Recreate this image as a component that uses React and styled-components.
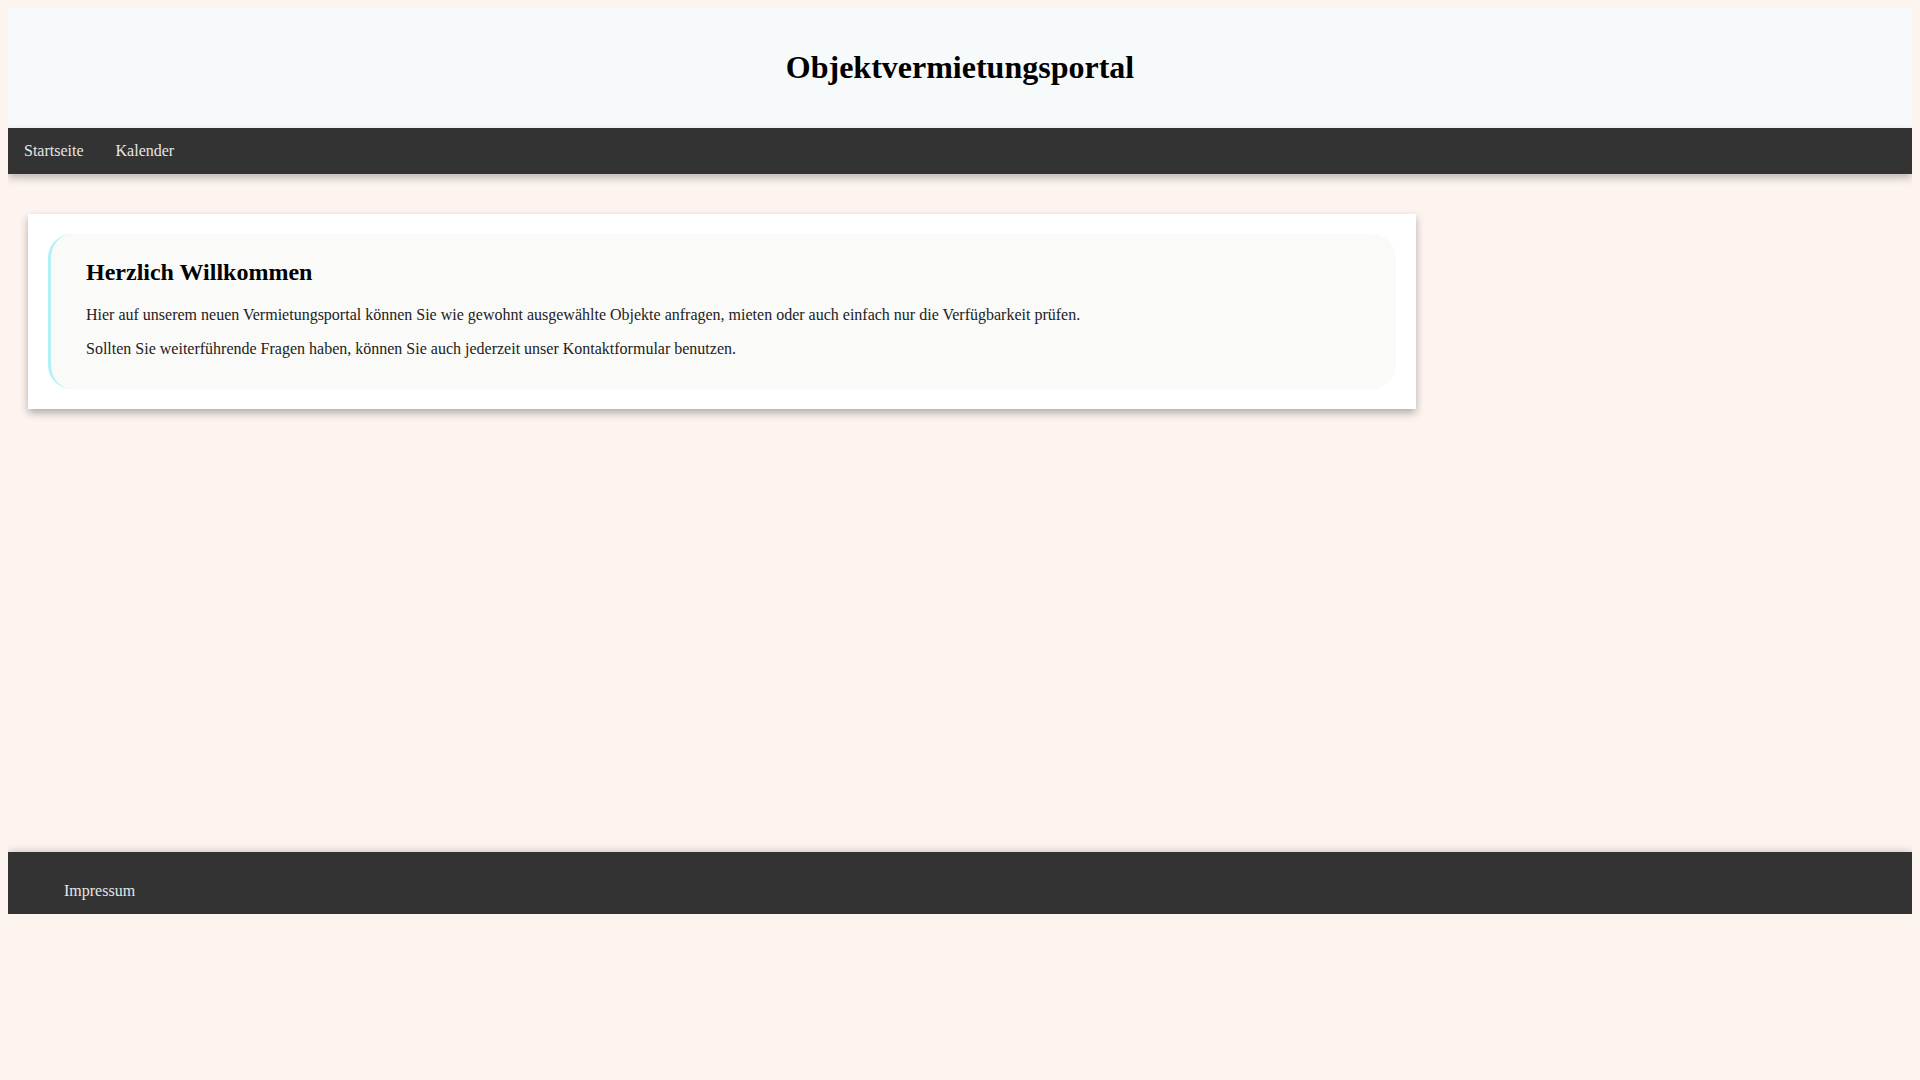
import styled, { createGlobalStyle } from 'styled-components'

const GlobalStyle = createGlobalStyle`
  body {
    margin: 8px;
    background: #fdf4ef;
    font-family: "Liberation Serif", "Times New Roman", serif;
    color: #111;
  }
`

const Header = styled.header`
  background: #f7fafb;
  padding: 20px;
  text-align: center;
  box-shadow: 0 0 10px rgba(0, 0, 0, 0.25);
  position: relative;
  z-index: 1;

  h1 {
    margin: 21px 0 22px;
    font-size: 32px;
    line-height: 37px;
    font-weight: bold;
    color: #000;
  }
`

const Nav = styled.nav`
  background: #333;
  display: flex;
  box-shadow: 0 4px 8px rgba(0, 0, 0, 0.25);
  position: relative;
  z-index: 1;
`

const NavLink = styled.a`
  display: block;
  padding: 14px 16px;
  color: #e6e6e6;
  text-decoration: none;
  font-size: 16px;
  line-height: 18px;
  cursor: pointer;
`

const Main = styled.main`
  box-sizing: border-box;
  min-height: 678px;
  padding: 40px 20px 20px;
`

const Card = styled.section`
  width: 1348px;
  background: #fff;
  padding: 20px;
  box-shadow: 0 4px 8px rgba(0, 0, 0, 0.3);
`

const Welcome = styled.div`
  background: #fafaf9;
  border-left: 3px solid #b3f0f5;
  border-radius: 24px;
  padding: 5px 35px 15px;

  h2 {
    margin: 20px 0;
    font-size: 24px;
    line-height: 27px;
    color: #000;
  }

  p {
    margin: 16px 0;
    font-size: 16px;
    line-height: 18px;
    color: #222;
  }
`

const Footer = styled.footer`
  background: #333;
  padding: 30px 16px 14px 56px;
  box-shadow: 0 0 8px rgba(0, 0, 0, 0.25);
`

const FooterLink = styled.a`
  color: #e6e6e6;
  font-size: 16px;
  line-height: 18px;
  text-decoration: none;
`

export default function App() {
  return (
    <>
      <GlobalStyle />
      <Header>
        <h1>Objektvermietungsportal</h1>
      </Header>
      <Nav>
        <NavLink>Startseite</NavLink>
        <NavLink>Kalender</NavLink>
      </Nav>
      <Main>
        <Card>
          <Welcome>
            <h2>Herzlich Willkommen</h2>
            <p>
              Hier auf unserem neuen Vermietungsportal können Sie wie gewohnt ausgewählte Objekte
              anfragen, mieten oder auch einfach nur die Verfügbarkeit prüfen.
            </p>
            <p>
              Sollten Sie weiterführende Fragen haben, können Sie auch jederzeit unser
              Kontaktformular benutzen.
            </p>
          </Welcome>
        </Card>
      </Main>
      <Footer>
        <FooterLink>Impressum</FooterLink>
      </Footer>
    </>
  )
}
